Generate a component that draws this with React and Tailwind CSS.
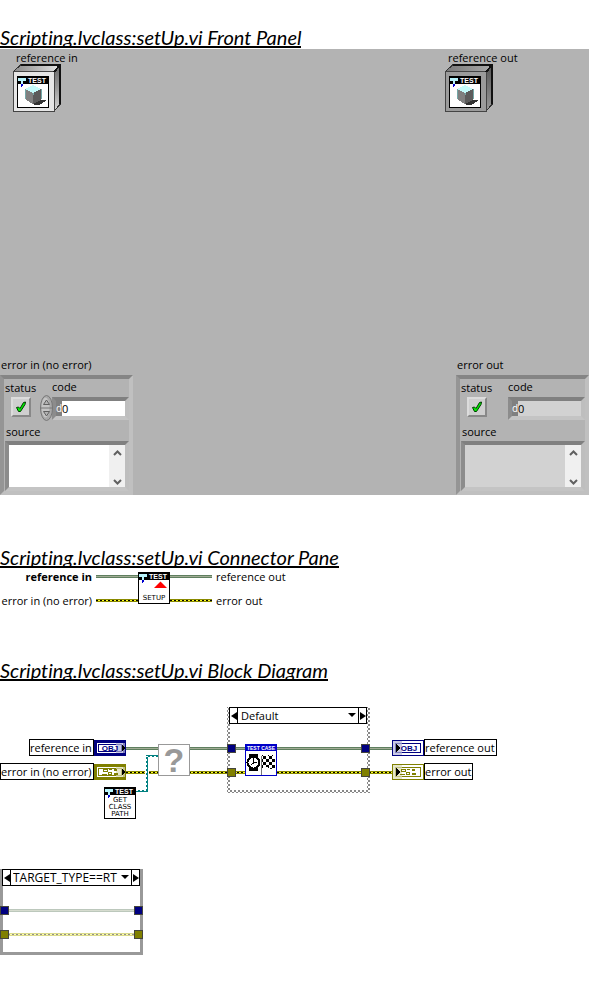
import { useId } from "react";

function Heading({ children }) {
  return (
    <h2 className="flex h-5">
      <span className="h-5 whitespace-nowrap border-b-2 border-black font-['Lato',sans-serif] text-[20px] leading-[18px] italic [font-variant-ligatures:none]">
        {children}
      </span>
    </h2>
  );
}

function TestBanner() {
  return (
    <>
      <rect width="32" height="32" fill="#fff" />
      <rect width="32" height="8" fill="#000" />
      <rect x="0.5" y="0.5" width="31" height="31" fill="none" stroke="#000" />
      <path d="M1 2h8v3H6v3H4V5H1z" fill="#b8f4fc" />
      <path d="M4 8h2v2H5v1H4z" fill="#0000d0" />
      <text x="20" y="7" textAnchor="middle" fill="#fff" className="font-['Liberation_Sans',sans-serif] text-[7px] font-bold">
        TEST
      </text>
    </>
  );
}

function CubeTerminal({ dark }) {
  const id = useId();
  const face = dark ? "#9b9b9b" : "#e6e6e6";
  return (
    <svg width="48" height="48" viewBox="0 0 48 48" shapeRendering="crispEdges" aria-hidden="true" className="-mt-px">
      <defs>
        <linearGradient id={id + "t"}>
          <stop offset="0" stopColor={dark ? "#777" : "#888"} />
          <stop offset="1" stopColor={dark ? "#aaa" : "#e4e4e4"} />
        </linearGradient>
        <linearGradient id={id + "s"} x2="0" y2="1">
          <stop offset="0" stopColor={dark ? "#555" : "#666"} />
          <stop offset="0.5" stopColor={dark ? "#777" : "#999"} />
          <stop offset="1" stopColor={dark ? "#999" : "#d8d8d8"} />
        </linearGradient>
      </defs>
      <path d="M0 8L8 0.500H47.500L41 8z" fill={`url(#${id}t)`} stroke="#333" />
      <path d="M41 8L47.500 1V40L41 47z" fill={`url(#${id}s)`} stroke="#333" />
      <rect x="0.5" y="7.5" width="41" height="40" fill={face} stroke="#444" strokeWidth="1" />
      <path d="M8 1H47V40M41 8L47 1" fill="none" stroke="#111" strokeWidth="2" />
      <g transform="translate(4 12)">
        <TestBanner />
        <path d="M16 28l5-4h8v1l-3 1v1l-4 2h-5z" fill="#333" />
        <path d="M8 13l8 3v12l-7-4-1-2z" fill="#808080" />
        <path d="M16 16l8-3v11l-8 4z" fill="#5c5c5c" />
        <path d="M8 13l8-4 8 4-8 4z" fill="#c4fbfb" />
        <path d="M8 13v10M24 13v10M16 17v2" stroke="#74a8a8" fill="none" />
      </g>
    </svg>
  );
}

function ScrollArrow({ up }) {
  return (
    <svg width="9" height="6" viewBox="0 0 9 6" aria-hidden="true">
      <path d={up ? "M1 5L4.500 1.500L8 5" : "M1 1L4.500 4.500L8 1"} fill="none" stroke="#606060" strokeWidth="2" />
    </svg>
  );
}

const sunken = "border-[4px] border-t-[#808080] border-l-[#8c8c8c] border-r-[#bebebe] border-b-[#c4c4c4]";

function ErrorCluster({ title, output }) {
  const id = useId();
  const fill = output ? "bg-[#d2d2d2]" : "bg-white";
  return (
    <fieldset className="w-[133px] min-w-0">
      <legend className="px-px text-[11px] leading-[20px]">{title}</legend>
      <div className="h-[120px] border-[4px] border-t-[#858585] border-r-[#c0c0c0] border-b-[#c0c0c0] border-l-[#959595] pl-px">
        <div className="flex">
          <div className="w-[47px]">
            <label htmlFor={id + "st"} className="block text-[11px] leading-[18px]">status</label>
            <span className="relative ml-[6px] block size-5 border-2 border-t-[#dcdcdc] border-r-[#888] border-b-[#888] border-l-[#dcdcdc] bg-[#cfcfcf]">
              <input id={id + "st"} type="checkbox" defaultChecked className="block size-4 appearance-none" />
              <svg className="pointer-events-none absolute top-0.5 left-0.5" width="12" height="12" viewBox="0 0 12 12" aria-hidden="true">
                <path d="M1.500 6.500L3.500 6L5 7.500L8.500 1.500L10.500 1L10 3.500L5.500 10.500H3.500z" fill="#00f000" stroke="#003800" />
              </svg>
            </span>
          </div>
          <div className="min-w-0 flex-1">
            <label htmlFor={id + "co"} className="block text-[11px] leading-[16px]">code</label>
            <div className="relative mt-0.5">
              {!output && (
                <button type="button" aria-label="Step code" className="absolute -top-0.5 -left-3">
                  <svg width="13" height="26" viewBox="0 0 13 26" aria-hidden="true">
                    <ellipse cx="6.500" cy="13" rx="6" ry="12.500" fill="#a8a8a8" stroke="#777" />
                    <ellipse cx="5.500" cy="12.500" rx="4" ry="10" fill="#c4c4c4" />
                    <path d="M1 13h11" stroke="#777" />
                    <path d="M3.500 9.500L6.500 5L9.500 9.500zM3.500 16.500L6.500 21L9.500 16.500z" fill="#b4b4b4" stroke="#606060" />
                  </svg>
                </button>
              )}
              <div className={"flex h-[23px] " + sunken}>
                <span className="w-[6px] bg-[#808080] text-[10px] leading-[15px] text-white">d</span>
                <input id={id + "co"} readOnly={output} defaultValue="0" className={"min-w-0 flex-1 text-[11px] leading-[15px] " + fill} />
              </div>
            </div>
          </div>
        </div>
        <label htmlFor={id + "so"} className="mt-[3px] block pl-px text-[11px] leading-[18px]">source</label>
        <div className={"flex h-[50px] " + sunken}>
          <textarea id={id + "so"} readOnly={output} className={"h-full min-w-0 flex-1 resize-none overflow-hidden " + fill} />
          <div className="flex w-4 flex-col items-center justify-between bg-[#f0f0f0] pt-[5px] pb-0.5">
            <ScrollArrow up />
            <ScrollArrow />
          </div>
        </div>
      </div>
    </fieldset>
  );
}

function FrontPanel() {
  return (
    <section className="relative mt-px flex h-[446px] flex-col justify-between bg-[#b3b3b3]">
      <div className="flex justify-between pt-px">
        <figure className="ml-[13px]">
          <figcaption className="pl-[3px] text-[11px] leading-[15px]">reference in</figcaption>
          <CubeTerminal />
        </figure>
        <figure className="w-36">
          <figcaption className="pl-[3px] text-[11px] leading-[15px]">reference out</figcaption>
          <CubeTerminal dark />
        </figure>
      </div>
      <div className="flex justify-between">
        <ErrorCluster title="error in (no error)" />
        <ErrorCluster title="error out" output />
      </div>
    </section>
  );
}

function ObjWire({ x1, x2, y, pale }) {
  return (
    <>
      <path d={`M${x1} ${y}H${x2}`} stroke={pale ? "#bcc8bc" : "#5f7f5f"} strokeWidth="3" />
      <path d={`M${x1} ${y}H${x2}`} stroke={pale ? "#d6dccf" : "#a0ac94"} strokeWidth="1" />
    </>
  );
}

function ErrWire({ x1, x2, y, pale }) {
  return (
    <>
      <path d={`M${x1} ${y}H${x2}`} stroke={pale ? "#d9d98a" : "#8a8a00"} strokeWidth="3" />
      <path d={`M${x1} ${y}H${x2}`} stroke={pale ? "#ffffb0" : "#ffff20"} strokeWidth="1" />
      <path d={`M${x1} ${y}H${x2}`} stroke={pale ? "#909090" : "#000"} strokeWidth="1" strokeDasharray="2 2" />
    </>
  );
}

function WirePair() {
  return (
    <svg width="42" height="32" viewBox="0 0 42 32" shapeRendering="crispEdges" aria-hidden="true">
      <ObjWire x1={0} x2={42} y={4.5} />
      <ErrWire x1={0} x2={42} y={28.5} />
    </svg>
  );
}

function ConnectorPane() {
  return (
    <section className="relative flex bg-white pt-[3px] text-[11px] leading-[12px]">
      <div className="flex h-9 w-[96px] flex-col justify-between pr-[4px] text-right whitespace-nowrap">
        <strong>reference in</strong>
        <span>error in (no error)</span>
      </div>
      <div className="flex pt-px">
        <WirePair />
        <svg width="32" height="32" viewBox="0 0 32 32" aria-hidden="true">
          <TestBanner />
          <path d="M16 16L22.500 9.500L29 16z" fill="#f00" />
          <text x="16" y="28" textAnchor="middle" className="font-['DejaVu_Sans',sans-serif] text-[7px]">SETUP</text>
        </svg>
        <WirePair />
      </div>
      <div className="flex h-9 flex-col justify-between pl-[4px] whitespace-nowrap">
        <span>reference out</span>
        <span>error out</span>
      </div>
    </section>
  );
}

function CaseSelector({ value, large }) {
  return (
    <div className="flex h-[17px] w-[138px] border border-black bg-white">
      <button type="button" aria-label="Previous case" className="flex w-2 items-center justify-center border-r border-black">
        <svg width="6" height="8" viewBox="0 0 6 8" aria-hidden="true"><path d="M6 0V8L0 4z" /></svg>
      </button>
      <div className="relative min-w-0 flex-1">
        <select aria-label="Case" className={"block h-[15px] w-full appearance-none leading-[15px] outline-none " + (large ? "pl-0.5 text-[12px]" : "pl-[3px] text-[11px]")}>
          <option>{value}</option>
        </select>
        <svg className="pointer-events-none absolute top-[5px] right-0.5" width="8" height="5" viewBox="0 0 8 5" aria-hidden="true">
          <path d="M0 0H8L4 4z" />
        </svg>
      </div>
      <button type="button" aria-label="Next case" className="flex w-2 items-center justify-center border-l border-black">
        <svg width="6" height="8" viewBox="0 0 6 8" aria-hidden="true"><path d="M0 0V8L6 4z" /></svg>
      </button>
    </div>
  );
}

function Tunnel({ x, y, error }) {
  return <rect x={x + 0.5} y={y + 0.5} width="8" height="8" fill={error ? "#808000" : "#000080"} stroke="#45453c" />;
}

function TerminalFrame({ color, tint, output, children }) {
  return (
    <>
      <rect width="32" height="16" fill={color} />
      <rect x={output ? 1 : 3} y={output ? 1 : 3} width={output ? 30 : 26} height={output ? 14 : 10} fill="#fff" />
      <rect x={output ? 3 : 4} y={output ? 3 : 4} width={output ? 26 : 24} height={output ? 10 : 8} fill={color} />
      <rect x={output ? 4 : 5} y={output ? 4 : 5} width={output ? 24 : 22} height={output ? 8 : 6} fill="#fff" />
      <rect x={output ? 1 : 22} y={output ? 1 : 3} width="9" height={output ? 14 : 10} fill={tint} opacity="0.7" />
      {children}
      <path d={output ? "M4 4L8 8L4 12z" : "M28 5L31 8L28 11z"} />
    </>
  );
}

function ObjTerminal({ x, y, output }) {
  return (
    <g transform={`translate(${x} ${y})`}>
      <TerminalFrame color="#000080" tint="#b4b4d8" output={output}>
        <text x={output ? 17 : 16} y="11" textAnchor="middle" fill="#000080" className="font-['Liberation_Sans',sans-serif] text-[8px] font-bold">
          OBJ
        </text>
      </TerminalFrame>
    </g>
  );
}

function ErrTerminal({ x, y, output }) {
  return (
    <g transform={`translate(${x} ${y})`}>
      <TerminalFrame color="#808000" tint="#dcdcb4" output={output}>
        <path d="M9 5h5v3H9zM15 5h3v1h-3zM20 5h3v2h-3zM8 10h5v1H8zM14 8h4v3h-4zM20 9h4v2h-4z" fill="#808000" />
        <path d="M10 6h3v1h-3zM15 9h2v1h-2z" fill="#fff" />
      </TerminalFrame>
    </g>
  );
}

function NodeLabel({ place, children }) {
  return (
    <span className={"absolute h-[17px] border border-black bg-white text-[11px] leading-[15px] whitespace-nowrap " + place}>
      {children}
    </span>
  );
}

function BlockDiagram() {
  return (
    <section className="relative bg-white pt-[26px]">
      <div className="relative h-[114px]">
        <svg className="absolute top-0 left-0" width="500" height="114" viewBox="0 707 500 114" shapeRendering="crispEdges" aria-hidden="true">
          <defs>
            <pattern id="weave" width="4" height="4" patternUnits="userSpaceOnUse">
              <rect width="4" height="4" fill="#fff" />
              <path d="M0 0h2v2H0zM2 2h2v2H2z" fill="#888" />
            </pattern>
            <pattern id="flag" width="6" height="6" patternUnits="userSpaceOnUse">
              <path d="M0 0h3v3H0zM3 3h3v3H3z" />
            </pattern>
          </defs>
          <path d="M228.500 707V791.500H368.500V707" fill="none" stroke="url(#weave)" strokeWidth="3" />
          <ObjWire x1={126} x2={392} y={748.5} />
          <ErrWire x1={126} x2={145} y={772.5} />
          <ErrWire x1={149} x2={392} y={772.5} />
          <path d="M136 791H147V756H158" fill="none" stroke="#008080" strokeWidth="2" />
          <path d="M136 790.500H146.500V756.500H158" fill="none" stroke="#fff" strokeDasharray="2 2" />
          <ObjTerminal x={94} y={740} />
          <ErrTerminal x={94} y={764} />
          <ObjTerminal x={392} y={740} output />
          <ErrTerminal x={392} y={764} output />
          <rect x="158.500" y="744.500" width="31" height="31" fill="#fff" stroke="#999" />
          <text x="174" y="772" textAnchor="middle" fill="#999" className="font-['Liberation_Sans',sans-serif] text-[34px] font-bold">?</text>
          <g transform="translate(104 787)">
            <TestBanner />
            <g textAnchor="middle" className="font-['DejaVu_Sans',sans-serif] text-[7px]">
              <text x="16" y="15">GET</text>
              <text x="16" y="22">CLASS</text>
              <text x="16" y="29">PATH</text>
            </g>
          </g>
          <Tunnel x={227} y={744} />
          <Tunnel x={227} y={768} error />
          <Tunnel x={361} y={744} />
          <Tunnel x={361} y={768} error />
          <g transform="translate(245 744)">
            <rect x="0.5" y="0.5" width="31" height="31" fill="#fff" stroke="#0000c8" />
            <rect width="32" height="7" fill="#0000c8" />
            <text x="16" y="6" textAnchor="middle" fill="#fff" className="font-['Liberation_Sans',sans-serif] text-[5px] font-bold">TEST CASE</text>
            <path d="M4 10h9v4H4zM4 23h9v4H4z" />
            <circle cx="8.500" cy="18.500" r="6" fill="#fff" stroke="#000" strokeWidth="2" />
            <path d="M8.500 14v5L6 21M9 18h3" stroke="#000" fill="none" />
            <path d="M16.500 12v19" stroke="#777" />
            <path d="M17 11l4 1 4-1 5 1v12l-4 1-4-2-5 1z" fill="url(#flag)" />
          </g>
        </svg>
        <NodeLabel place="top-[32px] left-[29px] w-[65px]">reference in</NodeLabel>
        <NodeLabel place="top-[56px] left-0 w-[94px]">error in (no error)</NodeLabel>
        <NodeLabel place="top-[32px] left-[424px] w-[73px]">reference out</NodeLabel>
        <NodeLabel place="top-[56px] left-[424px] w-[49px]">error out</NodeLabel>
        <div className="absolute top-0 left-[229px]">
          <CaseSelector value="Default" />
        </div>
      </div>
    </section>
  );
}

function RealTimeCase() {
  return (
    <section className="mt-12 mb-12 w-[143px] border-x-[3px] border-b-[3px] border-[#999]">
      <div className="-mx-px">
        <CaseSelector value="TARGET_TYPE==RT" large />
      </div>
      <svg className="-mx-[3px] block max-w-none" width="143" height="66" viewBox="0 886 143 66" shapeRendering="crispEdges" aria-hidden="true">
        <ObjWire x1={8} x2={134} y={910.5} pale />
        <ErrWire x1={8} x2={134} y={934.5} pale />
        <Tunnel x={0} y={906} />
        <Tunnel x={0} y={930} error />
        <Tunnel x={134} y={906} />
        <Tunnel x={134} y={930} error />
      </svg>
    </section>
  );
}

export default function App() {
  return (
    <main className="min-h-screen overflow-x-hidden bg-white pt-7 font-['Open_Sans','Noto_Sans',sans-serif] text-[11px] text-black">
      <Heading>Scripting.lvclass:setUp.vi Front Panel</Heading>
      <FrontPanel />
      <div className="mt-[53px]">
        <Heading>Scripting.lvclass:setUp.vi Connector Pane</Heading>
      </div>
      <ConnectorPane />
      <div className="mt-[54px]">
        <Heading>Scripting.lvclass:setUp.vi Block Diagram</Heading>
      </div>
      <BlockDiagram />
      <RealTimeCase />
    </main>
  );
}
